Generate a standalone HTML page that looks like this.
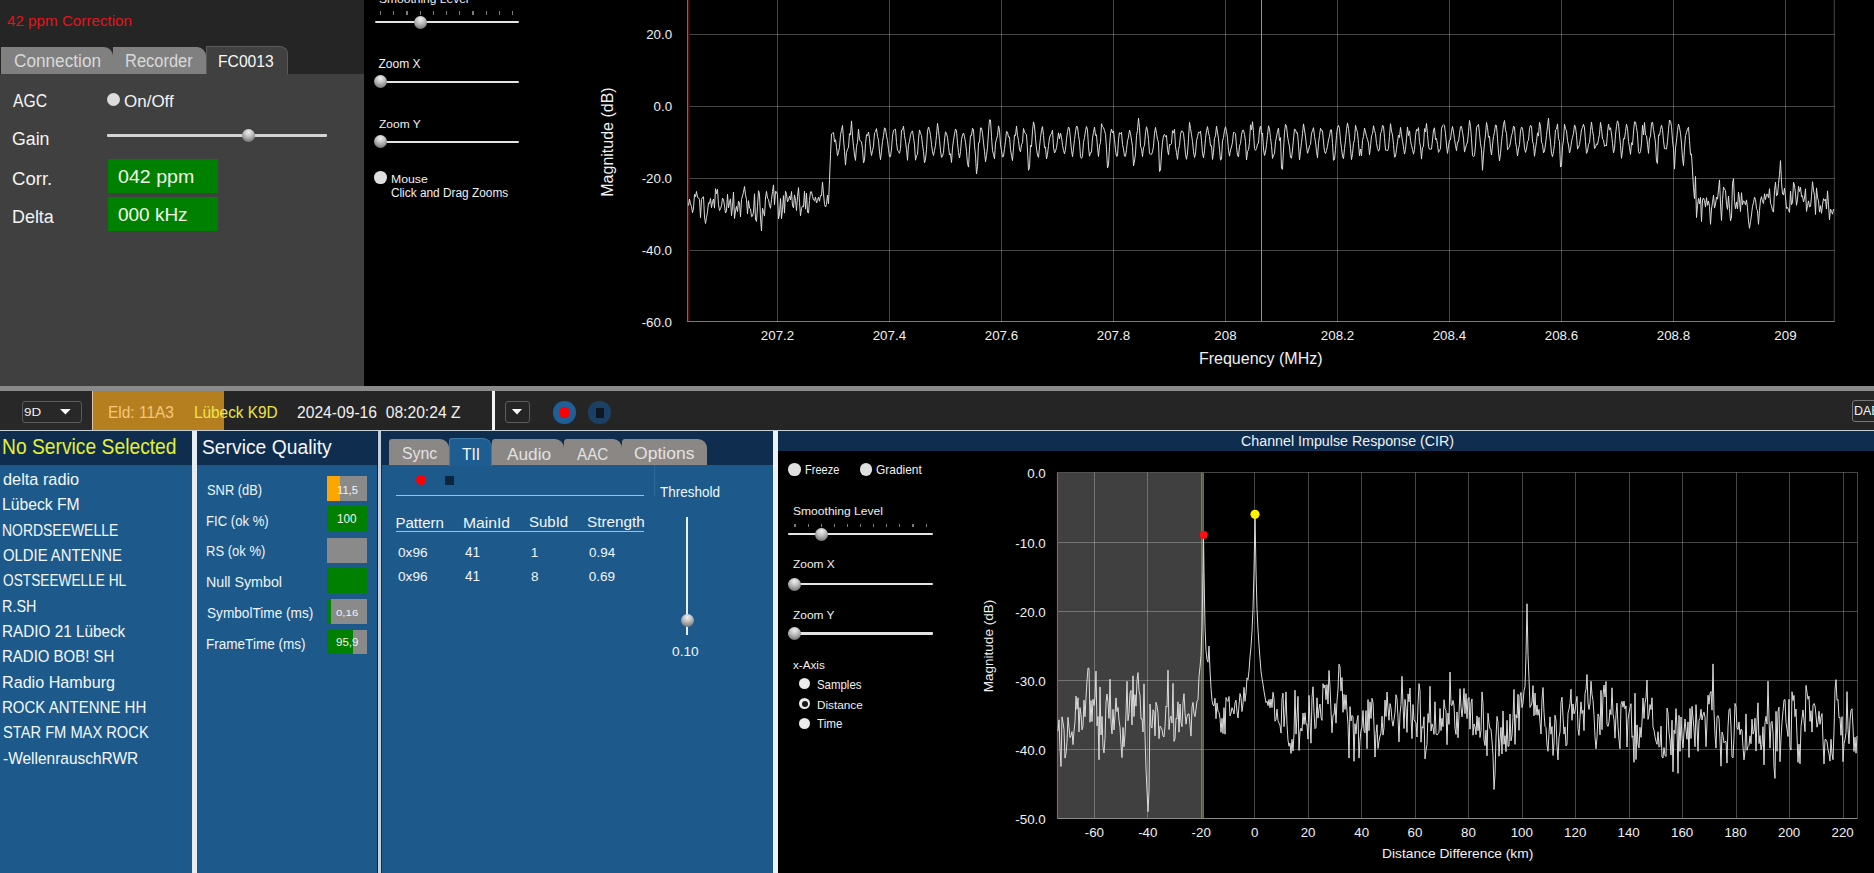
<!DOCTYPE html><html><head><meta charset="utf-8"><style>html,body{margin:0;padding:0;width:1874px;height:873px;overflow:hidden;background:#000;font-family:"Liberation Sans", sans-serif;position:relative}div{box-sizing:border-box}</style></head><body><div style="position:absolute;left:0px;top:0px;width:364px;height:74px;background:#252525;"></div><div style="position:absolute;left:7.30px;top:13.26px;font-size:15.29px;line-height:15.29px;color:#e3141c;white-space:pre;transform:scaleX(0.9942);transform-origin:0 0;">42 ppm Correction</div><div style="position:absolute;left:1px;top:47px;width:112px;height:27px;background:#808080;border-radius:0 9px 0 0"></div><div style="position:absolute;left:113px;top:47px;width:93px;height:27px;background:#808080;border-radius:0 9px 0 0"></div><div style="position:absolute;left:206px;top:46px;width:82px;height:29px;background:#404040;border-radius:0 8px 0 0;border:1px solid #5a5a5a;border-bottom:none"></div><div style="position:absolute;left:13.54px;top:53.23px;font-size:17.57px;line-height:17.57px;color:#d9d9d9;white-space:pre;transform:scaleX(0.9794);transform-origin:0 0;">Connection</div><div style="position:absolute;left:125.38px;top:53.13px;font-size:17.68px;line-height:17.68px;color:#d9d9d9;white-space:pre;transform:scaleX(0.9311);transform-origin:0 0;">Recorder</div><div style="position:absolute;left:218.24px;top:53.28px;font-size:17.39px;line-height:17.39px;color:#f8f8f8;white-space:pre;transform:scaleX(0.9023);transform-origin:0 0;">FC0013</div><div style="position:absolute;left:0px;top:74px;width:364px;height:312px;background:#404040;"></div><div style="position:absolute;left:13.40px;top:91.10px;font-size:19.14px;line-height:19.14px;color:#f4f4f4;white-space:pre;transform:scaleX(0.8216);transform-origin:0 0;">AGC</div><div style="position:absolute;left:12.31px;top:130.65px;font-size:17.43px;line-height:17.43px;color:#f4f4f4;white-space:pre;transform:scaleX(1.0181);transform-origin:0 0;">Gain</div><div style="position:absolute;left:12.27px;top:169.54px;font-size:18.14px;line-height:18.14px;color:#f4f4f4;white-space:pre;transform:scaleX(1.0234);transform-origin:0 0;">Corr.</div><div style="position:absolute;left:12.17px;top:206.81px;font-size:19.13px;line-height:19.13px;color:#f4f4f4;white-space:pre;transform:scaleX(0.9365);transform-origin:0 0;">Delta</div><div style="position:absolute;left:107.00px;top:92.90px;width:13.2px;height:13.2px;border-radius:50%;background:#dcdcdc"></div><div style="position:absolute;left:123.74px;top:94.16px;font-size:16.00px;line-height:16.00px;color:#f4f4f4;white-space:pre;transform:scaleX(1.0615);transform-origin:0 0;">On/Off</div><div style="position:absolute;left:107px;top:134px;width:220px;height:2.6px;background:#d4d4d4;border-radius:1px"></div><div style="position:absolute;left:241.80px;top:128.50px;width:13.6px;height:13.6px;border-radius:50%;background:radial-gradient(circle at 50% 25%, #f0f0f0 0%, #c4c4c4 35%, #7a7a7a 80%, #5a5a5a 100%)"></div><div style="position:absolute;left:108px;top:159px;width:109.5px;height:33.6px;background:#008000;"></div><div style="position:absolute;left:108px;top:197.1px;width:109.5px;height:33.6px;background:#008000;"></div><div style="position:absolute;left:118.11px;top:168.70px;font-size:17.71px;line-height:17.71px;color:#f4fae8;white-space:pre;transform:scaleX(1.1082);transform-origin:0 0;">042 ppm</div><div style="position:absolute;left:118.14px;top:205.84px;font-size:18.14px;line-height:18.14px;color:#f4fae8;white-space:pre;transform:scaleX(1.0469);transform-origin:0 0;">000 kHz</div><div style="position:absolute;left:364px;top:0px;width:1510px;height:386px;background:#000;"></div><div style="position:absolute;left:379.16px;top:-6.17px;font-size:11.43px;line-height:11.43px;color:#f0f0f0;white-space:pre;transform:scaleX(1.0521);transform-origin:0 0;">Smoothing Level</div><div style="position:absolute;left:374.6px;top:20.95px;width:144.19999999999993px;height:2.5px;background:#e4e4e4;border-radius:1px"></div><div style="position:absolute;left:380.00px;top:11px;width:1.2px;height:3.5px;background:#7a7a7a"></div><div style="position:absolute;left:393.20px;top:11px;width:1.2px;height:3.5px;background:#7a7a7a"></div><div style="position:absolute;left:406.40px;top:11px;width:1.2px;height:3.5px;background:#7a7a7a"></div><div style="position:absolute;left:419.60px;top:11px;width:1.2px;height:3.5px;background:#7a7a7a"></div><div style="position:absolute;left:432.80px;top:11px;width:1.2px;height:3.5px;background:#7a7a7a"></div><div style="position:absolute;left:446.00px;top:11px;width:1.2px;height:3.5px;background:#7a7a7a"></div><div style="position:absolute;left:459.20px;top:11px;width:1.2px;height:3.5px;background:#7a7a7a"></div><div style="position:absolute;left:472.40px;top:11px;width:1.2px;height:3.5px;background:#7a7a7a"></div><div style="position:absolute;left:485.60px;top:11px;width:1.2px;height:3.5px;background:#7a7a7a"></div><div style="position:absolute;left:498.80px;top:11px;width:1.2px;height:3.5px;background:#7a7a7a"></div><div style="position:absolute;left:512.00px;top:11px;width:1.2px;height:3.5px;background:#7a7a7a"></div><div style="position:absolute;left:414.00px;top:15.70px;width:13.0px;height:13.0px;border-radius:50%;background:radial-gradient(circle at 50% 25%, #f0f0f0 0%, #c4c4c4 35%, #7a7a7a 80%, #5a5a5a 100%)"></div><div style="position:absolute;left:378.54px;top:57.82px;font-size:12.03px;line-height:12.03px;color:#f0f0f0;white-space:pre;">Zoom X</div><div style="position:absolute;left:374.6px;top:80.65px;width:144.19999999999993px;height:2.5px;background:#e4e4e4;border-radius:1px"></div><div style="position:absolute;left:374.40px;top:75.40px;width:13.0px;height:13.0px;border-radius:50%;background:radial-gradient(circle at 50% 25%, #f0f0f0 0%, #c4c4c4 35%, #7a7a7a 80%, #5a5a5a 100%)"></div><div style="position:absolute;left:378.54px;top:117.86px;font-size:11.74px;line-height:11.74px;color:#f0f0f0;white-space:pre;transform:scaleX(1.0207);transform-origin:0 0;">Zoom Y</div><div style="position:absolute;left:374.6px;top:140.65px;width:144.19999999999993px;height:2.5px;background:#e4e4e4;border-radius:1px"></div><div style="position:absolute;left:374.40px;top:135.40px;width:13.0px;height:13.0px;border-radius:50%;background:radial-gradient(circle at 50% 25%, #f0f0f0 0%, #c4c4c4 35%, #7a7a7a 80%, #5a5a5a 100%)"></div><div style="position:absolute;left:373.80px;top:170.80px;width:12.8px;height:12.8px;border-radius:50%;background:#e0e0e0"></div><div style="position:absolute;left:390.52px;top:172.56px;font-size:11.74px;line-height:11.74px;color:#f0f0f0;white-space:pre;transform:scaleX(1.0459);transform-origin:0 0;">Mouse</div><div style="position:absolute;left:390.91px;top:188.26px;font-size:11.86px;line-height:11.86px;color:#f0f0f0;white-space:pre;">Click and Drag Zooms</div><div style="position:absolute;left:0px;top:386px;width:1874px;height:5px;background:#8a8a8a;"></div><div style="position:absolute;left:0px;top:391px;width:1874px;height:39px;background:#252525;"></div><div style="position:absolute;left:0px;top:391px;width:92px;height:39px;background:#282828;"></div><div style="position:absolute;left:92px;top:391px;width:1px;height:39px;background:#d8c8a8;"></div><div style="position:absolute;left:93px;top:391px;width:131px;height:38.5px;background:#b57f1f;"></div><div style="position:absolute;left:22.2px;top:401.2px;width:59.6px;height:22.1px;border:1.5px solid #5c5c5c;border-radius:3px"></div><div style="position:absolute;left:23.50px;top:407.09px;font-size:11.59px;line-height:11.59px;color:#f2f2f2;white-space:pre;transform:scaleX(1.1573);transform-origin:0 0;">9D</div><svg style="position:absolute;left:0;top:0" width="1874" height="873"><polygon points="60.1,408.9 70.7,408.9 65.4,414.6" fill="#fff"/><polygon points="511.9,409 522,409 517,414.4" fill="#fff"/></svg><div style="position:absolute;left:107.66px;top:404.51px;font-size:16.52px;line-height:16.52px;color:#f6c778;white-space:pre;transform:scaleX(0.9371);transform-origin:0 0;">Eld: 11A3</div><div style="position:absolute;left:193.57px;top:404.51px;font-size:16.52px;line-height:16.52px;color:#ece648;white-space:pre;transform:scaleX(0.9295);transform-origin:0 0;">Lübeck K9D</div><div style="position:absolute;left:296.82px;top:404.86px;font-size:16.00px;line-height:16.00px;color:#f0f0f0;white-space:pre;transform:scaleX(0.9776);transform-origin:0 0;">2024-09-16  08:20:24 Z</div><div style="position:absolute;left:492px;top:391px;width:3px;height:39px;background:#f4f4f4;"></div><div style="position:absolute;left:505.2px;top:401.2px;width:24.6px;height:22px;border:1.5px solid #5c5c5c;border-radius:3px"></div><div style="position:absolute;left:553.3px;top:401.2px;width:22.4px;height:22.4px;border-radius:50%;background:#1f5e96"></div><div style="position:absolute;left:559.3px;top:407.2px;width:10.4px;height:10.4px;border-radius:50%;background:#ff0000"></div><div style="position:absolute;left:588.4px;top:401.2px;width:22.4px;height:22.4px;border-radius:50%;background:#1c4064"></div><div style="position:absolute;left:595.9px;top:407.9px;width:8.2px;height:9.7px;background:#0e1722;"></div><div style="position:absolute;left:1852px;top:400.3px;width:40px;height:21.4px;border:1.5px solid #777;border-radius:3px"></div><div style="position:absolute;left:1853.90px;top:404.85px;font-size:12.46px;line-height:12.46px;color:#f0f0f0;white-space:pre;">DAB</div><div style="position:absolute;left:0px;top:429.5px;width:1874px;height:1.6px;background:#c5cfd8;"></div><div style="position:absolute;left:0px;top:431px;width:192px;height:34px;background:#0f2d4f;"></div><div style="position:absolute;left:0px;top:465px;width:192px;height:408px;background:#1d5a8b;"></div><div style="position:absolute;left:192px;top:431px;width:5px;height:442px;background:#e6ecf2;"></div><div style="position:absolute;left:197px;top:431px;width:180px;height:34px;background:#0f2d4f;"></div><div style="position:absolute;left:197px;top:465px;width:180px;height:408px;background:#1d5a8b;"></div><div style="position:absolute;left:377px;top:431px;width:1px;height:442px;background:#0c2340;"></div><div style="position:absolute;left:378px;top:431px;width:3px;height:442px;background:#c4d0dc;"></div><div style="position:absolute;left:381px;top:431px;width:392px;height:34px;background:#0f2d4f;"></div><div style="position:absolute;left:381px;top:465px;width:392px;height:408px;background:#1d5a8b;"></div><div style="position:absolute;left:381px;top:431px;width:1.2px;height:442px;background:#0f2d4f;"></div><div style="position:absolute;left:773px;top:431px;width:5px;height:442px;background:#eef2f6;"></div><div style="position:absolute;left:778px;top:431px;width:1096px;height:20px;background:#0f2d4f;"></div><div style="position:absolute;left:778px;top:451px;width:1096px;height:422px;background:#000;"></div><div style="position:absolute;left:1.66px;top:437.27px;font-size:21.30px;line-height:21.30px;color:#e4f032;white-space:pre;transform:scaleX(0.9046);transform-origin:0 0;">No Service Selected</div><div style="position:absolute;left:2.95px;top:471.12px;font-size:17.10px;line-height:17.10px;color:#f4f8fc;white-space:pre;transform:scaleX(0.9542);transform-origin:0 0;">delta radio</div><div style="position:absolute;left:2.34px;top:496.44px;font-size:17.10px;line-height:17.10px;color:#f4f8fc;white-space:pre;transform:scaleX(0.9190);transform-origin:0 0;">Lübeck FM</div><div style="position:absolute;left:2.48px;top:521.76px;font-size:17.10px;line-height:17.10px;color:#f4f8fc;white-space:pre;transform:scaleX(0.8157);transform-origin:0 0;">NORDSEEWELLE</div><div style="position:absolute;left:2.93px;top:547.08px;font-size:17.10px;line-height:17.10px;color:#f4f8fc;white-space:pre;transform:scaleX(0.8688);transform-origin:0 0;">OLDIE ANTENNE</div><div style="position:absolute;left:2.98px;top:572.40px;font-size:17.10px;line-height:17.10px;color:#f4f8fc;white-space:pre;transform:scaleX(0.8006);transform-origin:0 0;">OSTSEEWELLE HL</div><div style="position:absolute;left:2.45px;top:597.72px;font-size:17.10px;line-height:17.10px;color:#f4f8fc;white-space:pre;transform:scaleX(0.8410);transform-origin:0 0;">R.SH</div><div style="position:absolute;left:2.38px;top:623.04px;font-size:17.10px;line-height:17.10px;color:#f4f8fc;white-space:pre;transform:scaleX(0.8947);transform-origin:0 0;">RADIO 21 Lübeck</div><div style="position:absolute;left:2.40px;top:648.36px;font-size:17.10px;line-height:17.10px;color:#f4f8fc;white-space:pre;transform:scaleX(0.8763);transform-origin:0 0;">RADIO BOB! SH</div><div style="position:absolute;left:2.31px;top:673.68px;font-size:17.10px;line-height:17.10px;color:#f4f8fc;white-space:pre;transform:scaleX(0.9445);transform-origin:0 0;">Radio Hamburg</div><div style="position:absolute;left:2.40px;top:699.00px;font-size:17.10px;line-height:17.10px;color:#f4f8fc;white-space:pre;transform:scaleX(0.8780);transform-origin:0 0;">ROCK ANTENNE HH</div><div style="position:absolute;left:2.94px;top:724.32px;font-size:17.10px;line-height:17.10px;color:#f4f8fc;white-space:pre;transform:scaleX(0.8585);transform-origin:0 0;">STAR FM MAX ROCK</div><div style="position:absolute;left:2.90px;top:749.64px;font-size:17.10px;line-height:17.10px;color:#f4f8fc;white-space:pre;transform:scaleX(0.9052);transform-origin:0 0;">-WellenrauschRWR</div><div style="position:absolute;left:201.73px;top:438.35px;font-size:19.43px;line-height:19.43px;color:#f6f8fa;white-space:pre;transform:scaleX(0.9932);transform-origin:0 0;">Service Quality</div><div style="position:absolute;left:206.92px;top:481.82px;font-size:15.22px;line-height:15.22px;color:#eef4fa;white-space:pre;transform:scaleX(0.8462);transform-origin:0 0;">SNR (dB)</div><div style="position:absolute;left:206.45px;top:512.62px;font-size:15.22px;line-height:15.22px;color:#eef4fa;white-space:pre;transform:scaleX(0.8620);transform-origin:0 0;">FIC (ok %)</div><div style="position:absolute;left:206.46px;top:543.42px;font-size:15.22px;line-height:15.22px;color:#eef4fa;white-space:pre;transform:scaleX(0.8558);transform-origin:0 0;">RS (ok %)</div><div style="position:absolute;left:206.36px;top:574.22px;font-size:15.22px;line-height:15.22px;color:#eef4fa;white-space:pre;transform:scaleX(0.9357);transform-origin:0 0;">Null Symbol</div><div style="position:absolute;left:206.89px;top:605.02px;font-size:15.22px;line-height:15.22px;color:#eef4fa;white-space:pre;transform:scaleX(0.8956);transform-origin:0 0;">SymbolTime (ms)</div><div style="position:absolute;left:206.42px;top:635.82px;font-size:15.22px;line-height:15.22px;color:#eef4fa;white-space:pre;transform:scaleX(0.8896);transform-origin:0 0;">FrameTime (ms)</div><div style="position:absolute;left:327.2px;top:476px;width:40px;height:24.8px;background:#8a8a8a;"></div><div style="position:absolute;left:327.2px;top:476px;width:12.6px;height:24.8px;background:#ffa500;"></div><div style="position:absolute;left:327.2px;top:506.4px;width:40px;height:24.8px;background:#8a8a8a;"></div><div style="position:absolute;left:327.2px;top:506.4px;width:40px;height:24.8px;background:#008000;"></div><div style="position:absolute;left:327.2px;top:537.8px;width:40px;height:24.8px;background:#8a8a8a;"></div><div style="position:absolute;left:327.2px;top:568.2px;width:40px;height:24.8px;background:#8a8a8a;"></div><div style="position:absolute;left:327.2px;top:568.2px;width:40px;height:24.8px;background:#008000;"></div><div style="position:absolute;left:327.2px;top:598.8px;width:40px;height:24.8px;background:#8a8a8a;"></div><div style="position:absolute;left:327.2px;top:598.8px;width:4px;height:24.8px;background:#008000;"></div><div style="position:absolute;left:327.2px;top:629.6px;width:40px;height:24.8px;background:#8a8a8a;"></div><div style="position:absolute;left:327.2px;top:629.6px;width:25.4px;height:24.8px;background:#008000;"></div><div style="position:absolute;left:336.56px;top:484.52px;font-size:10.72px;line-height:10.72px;color:#f4f4f4;white-space:pre;transform:scaleX(1.0413);transform-origin:0 0;">11,5</div><div style="position:absolute;left:337.32px;top:514.24px;font-size:11.88px;line-height:11.88px;color:#f4f4f4;white-space:pre;transform:scaleX(0.9849);transform-origin:0 0;">100</div><div style="position:absolute;left:335.84px;top:607.56px;font-size:9.86px;line-height:9.86px;color:#f4f4f4;white-space:pre;transform:scaleX(1.1641);transform-origin:0 0;">0,16</div><div style="position:absolute;left:335.78px;top:638.09px;font-size:10.29px;line-height:10.29px;color:#f4f4f4;white-space:pre;transform:scaleX(1.1216);transform-origin:0 0;">95,9</div><div style="position:absolute;left:388.9px;top:438.7px;width:60.60000000000002px;height:26.5px;background:#8a8785;border-radius:3px 9px 0 0"></div><div style="position:absolute;left:492.3px;top:438.7px;width:71.69999999999999px;height:26.5px;background:#8a8785;border-radius:3px 9px 0 0"></div><div style="position:absolute;left:563.6px;top:438.7px;width:58.39999999999998px;height:26.5px;background:#8a8785;border-radius:3px 9px 0 0"></div><div style="position:absolute;left:621.8px;top:438.7px;width:85.20000000000005px;height:26.5px;background:#8a8785;border-radius:3px 9px 0 0"></div><div style="position:absolute;left:449px;top:438.2px;width:43.30000000000001px;height:28px;background:#1e5d92;border:1px solid #3f79a8;border-bottom:none;border-radius:3px 9px 0 0"></div><div style="position:absolute;left:401.59px;top:446.23px;font-size:16.86px;line-height:16.86px;color:#e2e2e2;white-space:pre;transform:scaleX(0.9387);transform-origin:0 0;">Sync</div><div style="position:absolute;left:462.49px;top:446.02px;font-size:17.10px;line-height:17.10px;color:#f4f8ff;white-space:pre;transform:scaleX(0.9090);transform-origin:0 0;">TII</div><div style="position:absolute;left:506.90px;top:446.02px;font-size:17.10px;line-height:17.10px;color:#e2e2e2;white-space:pre;transform:scaleX(1.0091);transform-origin:0 0;">Audio</div><div style="position:absolute;left:577.40px;top:446.02px;font-size:17.10px;line-height:17.10px;color:#e2e2e2;white-space:pre;transform:scaleX(0.8887);transform-origin:0 0;">AAC</div><div style="position:absolute;left:634.21px;top:446.23px;font-size:16.86px;line-height:16.86px;color:#e2e2e2;white-space:pre;transform:scaleX(1.0401);transform-origin:0 0;">Options</div><div style="position:absolute;left:415.6px;top:475.3px;width:10.2px;height:10.2px;border-radius:50%;background:#ff0000"></div><div style="position:absolute;left:444.7px;top:475.8px;width:9.2px;height:9.2px;background:#0b2640;"></div><div style="position:absolute;left:396px;top:495px;width:247.5px;height:1.3px;background:#9cc2e0;"></div><div style="position:absolute;left:653.5px;top:465px;width:1px;height:32px;background:#2d6a9c;"></div><div style="position:absolute;left:395.40px;top:514.54px;font-size:15.07px;line-height:15.07px;color:#f0f6fc;white-space:pre;">Pattern</div><div style="position:absolute;left:462.74px;top:514.54px;font-size:15.07px;line-height:15.07px;color:#f0f6fc;white-space:pre;transform:scaleX(1.0411);transform-origin:0 0;">MainId</div><div style="position:absolute;left:528.73px;top:514.72px;font-size:14.86px;line-height:14.86px;color:#f0f6fc;white-space:pre;transform:scaleX(1.0096);transform-origin:0 0;">SubId</div><div style="position:absolute;left:586.81px;top:514.72px;font-size:14.86px;line-height:14.86px;color:#f0f6fc;white-space:pre;transform:scaleX(1.0270);transform-origin:0 0;">Strength</div><div style="position:absolute;left:396.2px;top:531.2px;width:247.7px;height:1.3px;background:#9cc2e0;"></div><div style="position:absolute;left:397.95px;top:545.71px;font-size:13.57px;line-height:13.57px;color:#f0f6fc;white-space:pre;transform:scaleX(1.0072);transform-origin:0 0;">0x96</div><div style="position:absolute;left:464.53px;top:545.55px;font-size:13.77px;line-height:13.77px;color:#f0f6fc;white-space:pre;transform:scaleX(0.9800);transform-origin:0 0;">41</div><div style="position:absolute;left:530.85px;top:545.77px;font-size:13.50px;line-height:13.50px;color:#f0f6fc;white-space:pre;">1</div><div style="position:absolute;left:588.76px;top:545.71px;font-size:13.57px;line-height:13.57px;color:#f0f6fc;white-space:pre;transform:scaleX(0.9903);transform-origin:0 0;">0.94</div><div style="position:absolute;left:397.95px;top:570.31px;font-size:13.57px;line-height:13.57px;color:#f0f6fc;white-space:pre;transform:scaleX(1.0072);transform-origin:0 0;">0x96</div><div style="position:absolute;left:464.53px;top:570.15px;font-size:13.77px;line-height:13.77px;color:#f0f6fc;white-space:pre;transform:scaleX(0.9800);transform-origin:0 0;">41</div><div style="position:absolute;left:531.02px;top:570.37px;font-size:13.50px;line-height:13.50px;color:#f0f6fc;white-space:pre;">8</div><div style="position:absolute;left:588.76px;top:570.31px;font-size:13.57px;line-height:13.57px;color:#f0f6fc;white-space:pre;">0.69</div><div style="position:absolute;left:659.93px;top:485.48px;font-size:14.20px;line-height:14.20px;color:#f0f6fc;white-space:pre;transform:scaleX(0.9512);transform-origin:0 0;">Threshold</div><div style="position:absolute;left:686px;top:517px;width:2.4px;height:118px;background:#e8eef4;"></div><div style="position:absolute;left:680.60px;top:613.60px;width:13.2px;height:13.2px;border-radius:50%;background:radial-gradient(circle at 50% 25%, #f0f0f0 0%, #c4c4c4 35%, #7a7a7a 80%, #5a5a5a 100%)"></div><div style="position:absolute;left:672.25px;top:645.17px;font-size:13.14px;line-height:13.14px;color:#f0f6fc;white-space:pre;transform:scaleX(1.0457);transform-origin:0 0;">0.10</div><div style="position:absolute;left:1241.09px;top:433.79px;font-size:14.43px;line-height:14.43px;color:#eef2f6;white-space:pre;transform:scaleX(0.9882);transform-origin:0 0;">Channel Impulse Response (CIR)</div><div style="position:absolute;left:788.00px;top:463.20px;width:12.6px;height:12.6px;border-radius:50%;background:#e0e0e0"></div><div style="position:absolute;left:804.72px;top:463.46px;font-size:13.04px;line-height:13.04px;color:#f0f0f0;white-space:pre;transform:scaleX(0.8450);transform-origin:0 0;">Freeze</div><div style="position:absolute;left:859.70px;top:463.20px;width:12.6px;height:12.6px;border-radius:50%;background:#e0e0e0"></div><div style="position:absolute;left:875.70px;top:463.62px;font-size:12.86px;line-height:12.86px;color:#f0f0f0;white-space:pre;transform:scaleX(0.9280);transform-origin:0 0;">Gradient</div><div style="position:absolute;left:792.66px;top:505.73px;font-size:11.43px;line-height:11.43px;color:#f0f0f0;white-space:pre;transform:scaleX(1.0569);transform-origin:0 0;">Smoothing Level</div><div style="position:absolute;left:788px;top:532.75px;width:144.89999999999998px;height:2.5px;background:#e4e4e4;border-radius:1px"></div><div style="position:absolute;left:794.40px;top:523.5px;width:1.2px;height:3.5px;background:#7a7a7a"></div><div style="position:absolute;left:807.51px;top:523.5px;width:1.2px;height:3.5px;background:#7a7a7a"></div><div style="position:absolute;left:820.62px;top:523.5px;width:1.2px;height:3.5px;background:#7a7a7a"></div><div style="position:absolute;left:833.73px;top:523.5px;width:1.2px;height:3.5px;background:#7a7a7a"></div><div style="position:absolute;left:846.84px;top:523.5px;width:1.2px;height:3.5px;background:#7a7a7a"></div><div style="position:absolute;left:859.95px;top:523.5px;width:1.2px;height:3.5px;background:#7a7a7a"></div><div style="position:absolute;left:873.06px;top:523.5px;width:1.2px;height:3.5px;background:#7a7a7a"></div><div style="position:absolute;left:886.17px;top:523.5px;width:1.2px;height:3.5px;background:#7a7a7a"></div><div style="position:absolute;left:899.28px;top:523.5px;width:1.2px;height:3.5px;background:#7a7a7a"></div><div style="position:absolute;left:912.39px;top:523.5px;width:1.2px;height:3.5px;background:#7a7a7a"></div><div style="position:absolute;left:925.50px;top:523.5px;width:1.2px;height:3.5px;background:#7a7a7a"></div><div style="position:absolute;left:814.50px;top:527.50px;width:13.0px;height:13.0px;border-radius:50%;background:radial-gradient(circle at 50% 25%, #f0f0f0 0%, #c4c4c4 35%, #7a7a7a 80%, #5a5a5a 100%)"></div><div style="position:absolute;left:792.84px;top:559.39px;font-size:11.59px;line-height:11.59px;color:#f0f0f0;white-space:pre;transform:scaleX(1.0300);transform-origin:0 0;">Zoom X</div><div style="position:absolute;left:788px;top:582.85px;width:144.89999999999998px;height:2.5px;background:#e4e4e4;border-radius:1px"></div><div style="position:absolute;left:788.40px;top:577.60px;width:13.0px;height:13.0px;border-radius:50%;background:radial-gradient(circle at 50% 25%, #f0f0f0 0%, #c4c4c4 35%, #7a7a7a 80%, #5a5a5a 100%)"></div><div style="position:absolute;left:792.84px;top:609.26px;font-size:11.74px;line-height:11.74px;color:#f0f0f0;white-space:pre;transform:scaleX(1.0133);transform-origin:0 0;">Zoom Y</div><div style="position:absolute;left:788px;top:632.35px;width:144.89999999999998px;height:2.5px;background:#e4e4e4;border-radius:1px"></div><div style="position:absolute;left:788.40px;top:627.10px;width:13.0px;height:13.0px;border-radius:50%;background:radial-gradient(circle at 50% 25%, #f0f0f0 0%, #c4c4c4 35%, #7a7a7a 80%, #5a5a5a 100%)"></div><div style="position:absolute;left:792.88px;top:658.86px;font-size:11.74px;line-height:11.74px;color:#f0f0f0;white-space:pre;">x-Axis</div><div style="position:absolute;left:799.20px;top:678.30px;width:11.2px;height:11.2px;border-radius:50%;background:#ececec"></div><div style="position:absolute;left:799.20px;top:698.30px;width:11.2px;height:11.2px;border-radius:50%;background:#ececec"></div><div style="position:absolute;left:801.80px;top:700.90px;width:6.0px;height:6.0px;border-radius:50%;background:#1a1a1a"></div><div style="position:absolute;left:799.20px;top:718.30px;width:11.2px;height:11.2px;border-radius:50%;background:#ececec"></div><div style="position:absolute;left:816.99px;top:678.92px;font-size:12.14px;line-height:12.14px;color:#f0f0f0;white-space:pre;transform:scaleX(0.9424);transform-origin:0 0;">Samples</div><div style="position:absolute;left:816.56px;top:699.51px;font-size:11.45px;line-height:11.45px;color:#f0f0f0;white-space:pre;transform:scaleX(1.0277);transform-origin:0 0;">Distance</div><div style="position:absolute;left:817.27px;top:719.04px;font-size:11.88px;line-height:11.88px;color:#f0f0f0;white-space:pre;transform:scaleX(0.9804);transform-origin:0 0;">Time</div><svg style="position:absolute;left:0;top:0" width="1874" height="873"><line x1="688" y1="34.5" x2="1834.5" y2="34.5" stroke="rgba(255,255,255,0.27)" stroke-width="1"/><line x1="688" y1="106.5" x2="1834.5" y2="106.5" stroke="rgba(255,255,255,0.27)" stroke-width="1"/><line x1="688" y1="178.5" x2="1834.5" y2="178.5" stroke="rgba(255,255,255,0.27)" stroke-width="1"/><line x1="688" y1="250.5" x2="1834.5" y2="250.5" stroke="rgba(255,255,255,0.27)" stroke-width="1"/><line x1="687" y1="321.5" x2="1834.5" y2="321.5" stroke="#787878" stroke-width="1"/><line x1="777.5" y1="0" x2="777.5" y2="322" stroke="rgba(255,255,255,0.27)" stroke-width="1"/><line x1="889.5" y1="0" x2="889.5" y2="322" stroke="rgba(255,255,255,0.27)" stroke-width="1"/><line x1="1001.5" y1="0" x2="1001.5" y2="322" stroke="rgba(255,255,255,0.27)" stroke-width="1"/><line x1="1113.5" y1="0" x2="1113.5" y2="322" stroke="rgba(255,255,255,0.27)" stroke-width="1"/><line x1="1225.5" y1="0" x2="1225.5" y2="322" stroke="rgba(255,255,255,0.27)" stroke-width="1"/><line x1="1337.5" y1="0" x2="1337.5" y2="322" stroke="rgba(255,255,255,0.27)" stroke-width="1"/><line x1="1449.5" y1="0" x2="1449.5" y2="322" stroke="rgba(255,255,255,0.27)" stroke-width="1"/><line x1="1561.5" y1="0" x2="1561.5" y2="322" stroke="rgba(255,255,255,0.27)" stroke-width="1"/><line x1="1673.5" y1="0" x2="1673.5" y2="322" stroke="rgba(255,255,255,0.27)" stroke-width="1"/><line x1="1785.5" y1="0" x2="1785.5" y2="322" stroke="rgba(255,255,255,0.27)" stroke-width="1"/><line x1="1834.3" y1="0" x2="1834.3" y2="322" stroke="rgba(255,255,255,0.27)" stroke-width="1"/><line x1="687.5" y1="0" x2="687.5" y2="322" stroke="#787878" stroke-width="1"/><line x1="688.7" y1="0" x2="688.7" y2="321" stroke="#4e1010" stroke-width="1.6"/><line x1="1261.5" y1="0" x2="1261.5" y2="321" stroke="#a09c44" stroke-width="1"/><polyline points="688.5,205.5 689.5,199.1 690.5,204.1 691.5,206.4 692.5,212.8 693.5,208.0 694.5,194.3 695.5,196.6 696.5,191.5 697.5,197.4 698.5,197.8 699.5,199.8 700.5,217.6 701.5,199.6 702.5,197.4 703.5,196.8 704.5,217.0 705.5,223.5 706.5,217.5 707.5,211.8 708.5,202.9 709.5,203.5 710.5,198.4 711.5,207.7 712.5,201.7 713.5,199.0 714.5,208.1 715.5,188.7 716.5,193.6 717.5,189.2 718.5,204.7 719.5,210.5 720.5,208.6 721.5,205.8 722.5,198.1 723.5,199.3 724.5,206.2 725.5,213.0 726.5,210.9 727.5,194.2 728.5,208.0 729.5,202.3 730.5,198.9 731.5,215.7 732.5,206.5 733.5,192.0 734.5,218.5 735.5,210.8 736.5,206.4 737.5,211.7 738.5,201.1 739.5,203.1 740.5,216.8 741.5,199.6 742.5,195.9 743.5,192.2 744.5,186.5 745.5,194.8 746.5,199.5 747.5,214.1 748.5,200.7 749.5,208.1 750.5,208.9 751.5,216.6 752.5,216.2 753.5,212.0 754.5,193.8 755.5,219.2 756.5,221.5 757.5,206.4 758.5,190.7 759.5,194.1 760.5,218.1 761.5,231.0 762.5,208.2 763.5,211.5 764.5,216.1 765.5,198.0 766.5,191.4 767.5,198.2 768.5,199.4 769.5,205.2 770.5,208.3 771.5,199.7 772.5,191.6 773.5,184.9 774.5,204.7 775.5,191.4 776.5,191.8 777.5,194.8 778.5,219.0 779.5,213.8 780.5,198.5 781.5,218.6 782.5,209.5 783.5,195.6 784.5,213.1 785.5,191.2 786.5,194.4 787.5,201.9 788.5,199.8 789.5,196.1 790.5,199.9 791.5,191.5 792.5,205.8 793.5,207.8 794.5,194.9 795.5,200.4 796.5,210.5 797.5,196.6 798.5,187.6 799.5,202.6 800.5,215.8 801.5,208.2 802.5,206.1 803.5,206.8 804.5,191.2 805.5,209.1 806.5,193.2 807.5,212.0 808.5,213.1 809.5,200.3 810.5,191.8 811.5,191.8 812.5,196.5 813.5,199.9 814.5,200.8 815.5,197.1 816.5,203.0 817.5,200.5 818.5,197.1 819.5,201.3 820.5,195.5 821.5,195.6 822.5,182.2 823.5,193.9 824.5,204.3 825.5,207.0 826.5,204.4 827.5,195.0 828.5,203.8 829.5,179.8 830.5,154.7 831.5,134.0 832.5,133.2 833.5,132.6 834.5,141.9 835.5,139.7 836.5,147.3 837.5,155.7 838.5,152.3 839.5,147.2 840.5,134.7 841.5,130.3 842.5,125.5 843.5,138.9 844.5,151.7 845.5,165.1 846.5,152.5 847.5,149.4 848.5,147.2 849.5,133.6 850.5,135.1 851.5,120.9 852.5,135.9 853.5,146.3 854.5,155.0 855.5,160.4 856.5,146.3 857.5,142.5 858.5,129.0 859.5,139.8 860.5,141.0 861.5,142.0 862.5,148.7 863.5,162.8 864.5,160.5 865.5,143.7 866.5,134.6 867.5,135.7 868.5,132.0 869.5,138.5 870.5,149.2 871.5,155.5 872.5,150.7 873.5,146.2 874.5,132.8 875.5,131.9 876.5,128.6 877.5,136.5 878.5,140.2 879.5,151.9 880.5,159.8 881.5,150.9 882.5,141.5 883.5,135.8 884.5,127.8 885.5,128.9 886.5,136.1 887.5,140.6 888.5,149.4 889.5,156.7 890.5,156.6 891.5,149.0 892.5,136.2 893.5,130.2 894.5,129.7 895.5,129.2 896.5,142.6 897.5,150.2 898.5,151.5 899.5,153.3 900.5,148.6 901.5,130.2 902.5,129.9 903.5,126.3 904.5,135.7 905.5,141.7 906.5,149.4 907.5,160.3 908.5,144.9 909.5,141.3 910.5,134.7 911.5,132.3 912.5,130.9 913.5,137.5 914.5,144.9 915.5,160.2 916.5,155.7 917.5,154.7 918.5,138.9 919.5,129.9 920.5,133.4 921.5,135.5 922.5,144.8 923.5,151.5 924.5,162.8 925.5,159.1 926.5,149.7 927.5,131.1 928.5,127.0 929.5,130.3 930.5,135.3 931.5,144.3 932.5,151.8 933.5,155.5 934.5,150.4 935.5,145.4 936.5,135.3 937.5,123.3 938.5,130.6 939.5,140.3 940.5,150.7 941.5,157.4 942.5,156.4 943.5,152.2 944.5,140.0 945.5,131.8 946.5,133.4 947.5,137.6 948.5,146.4 949.5,155.0 950.5,153.7 951.5,162.5 952.5,147.9 953.5,140.1 954.5,134.1 955.5,129.0 956.5,130.8 957.5,143.2 958.5,152.6 959.5,158.0 960.5,151.7 961.5,139.4 962.5,135.1 963.5,133.0 964.5,136.8 965.5,142.3 966.5,151.2 967.5,163.7 968.5,167.1 969.5,149.1 970.5,135.6 971.5,135.7 972.5,128.2 973.5,129.8 974.5,145.9 975.5,155.1 976.5,174.0 977.5,166.5 978.5,142.7 979.5,142.5 980.5,127.9 981.5,128.0 982.5,133.2 983.5,142.9 984.5,151.3 985.5,161.7 986.5,155.6 987.5,147.3 988.5,131.9 989.5,119.8 990.5,120.0 991.5,136.6 992.5,150.7 993.5,154.4 994.5,158.7 995.5,143.1 996.5,139.1 997.5,135.7 998.5,125.9 999.5,129.6 1000.5,144.8 1001.5,150.6 1002.5,157.0 1003.5,156.4 1004.5,148.6 1005.5,141.1 1006.5,131.5 1007.5,132.1 1008.5,137.1 1009.5,137.0 1010.5,149.4 1011.5,155.5 1012.5,160.6 1013.5,147.8 1014.5,135.0 1015.5,135.6 1016.5,126.1 1017.5,135.5 1018.5,140.5 1019.5,149.5 1020.5,151.8 1021.5,144.6 1022.5,142.7 1023.5,128.5 1024.5,132.0 1025.5,133.5 1026.5,134.7 1027.5,150.0 1028.5,170.3 1029.5,167.5 1030.5,145.3 1031.5,146.7 1032.5,130.8 1033.5,121.9 1034.5,126.1 1035.5,138.9 1036.5,149.2 1037.5,155.1 1038.5,157.4 1039.5,146.9 1040.5,137.6 1041.5,130.3 1042.5,126.6 1043.5,135.4 1044.5,147.8 1045.5,147.1 1046.5,158.9 1047.5,154.3 1048.5,145.5 1049.5,138.0 1050.5,134.9 1051.5,133.8 1052.5,130.2 1053.5,147.1 1054.5,153.0 1055.5,151.1 1056.5,147.7 1057.5,140.4 1058.5,132.8 1059.5,138.9 1060.5,133.3 1061.5,137.3 1062.5,145.3 1063.5,150.4 1064.5,153.9 1065.5,149.2 1066.5,138.9 1067.5,131.5 1068.5,127.0 1069.5,128.9 1070.5,140.1 1071.5,150.3 1072.5,156.7 1073.5,148.2 1074.5,139.6 1075.5,131.9 1076.5,126.0 1077.5,127.1 1078.5,135.3 1079.5,142.0 1080.5,156.7 1081.5,158.4 1082.5,156.1 1083.5,142.3 1084.5,137.6 1085.5,130.7 1086.5,126.5 1087.5,130.0 1088.5,146.9 1089.5,156.3 1090.5,152.4 1091.5,152.3 1092.5,137.9 1093.5,132.5 1094.5,127.0 1095.5,135.5 1096.5,134.7 1097.5,147.7 1098.5,156.5 1099.5,145.8 1100.5,142.5 1101.5,123.7 1102.5,126.6 1103.5,127.5 1104.5,130.6 1105.5,134.3 1106.5,149.1 1107.5,168.0 1108.5,164.8 1109.5,146.6 1110.5,133.5 1111.5,129.0 1112.5,132.9 1113.5,131.0 1114.5,139.8 1115.5,149.8 1116.5,156.4 1117.5,155.9 1118.5,139.2 1119.5,132.7 1120.5,133.9 1121.5,132.3 1122.5,144.5 1123.5,148.9 1124.5,156.1 1125.5,156.3 1126.5,149.7 1127.5,140.7 1128.5,137.1 1129.5,130.0 1130.5,133.4 1131.5,140.1 1132.5,146.6 1133.5,165.9 1134.5,161.0 1135.5,153.8 1136.5,135.5 1137.5,130.5 1138.5,118.1 1139.5,127.7 1140.5,146.3 1141.5,148.9 1142.5,156.7 1143.5,147.6 1144.5,145.4 1145.5,132.9 1146.5,126.8 1147.5,130.9 1148.5,139.4 1149.5,153.4 1150.5,154.2 1151.5,154.4 1152.5,151.9 1153.5,146.1 1154.5,133.1 1155.5,127.4 1156.5,133.5 1157.5,139.5 1158.5,142.2 1159.5,171.5 1160.5,169.9 1161.5,154.0 1162.5,142.2 1163.5,135.7 1164.5,134.3 1165.5,136.9 1166.5,135.4 1167.5,149.6 1168.5,154.7 1169.5,144.5 1170.5,144.9 1171.5,143.3 1172.5,130.6 1173.5,133.1 1174.5,129.2 1175.5,146.8 1176.5,152.6 1177.5,159.3 1178.5,149.4 1179.5,145.3 1180.5,134.4 1181.5,130.9 1182.5,131.2 1183.5,133.3 1184.5,142.8 1185.5,154.3 1186.5,159.3 1187.5,153.0 1188.5,138.8 1189.5,122.4 1190.5,128.4 1191.5,134.5 1192.5,141.7 1193.5,151.5 1194.5,157.5 1195.5,153.9 1196.5,140.7 1197.5,136.8 1198.5,132.2 1199.5,132.8 1200.5,131.2 1201.5,140.4 1202.5,153.2 1203.5,157.8 1204.5,150.8 1205.5,138.5 1206.5,130.8 1207.5,126.6 1208.5,133.1 1209.5,136.5 1210.5,145.8 1211.5,145.7 1212.5,159.4 1213.5,152.2 1214.5,138.4 1215.5,135.8 1216.5,126.2 1217.5,132.2 1218.5,138.9 1219.5,149.3 1220.5,160.1 1221.5,159.2 1222.5,141.1 1223.5,137.4 1224.5,130.4 1225.5,126.8 1226.5,131.6 1227.5,137.8 1228.5,150.4 1229.5,156.2 1230.5,150.0 1231.5,147.0 1232.5,142.2 1233.5,132.4 1234.5,132.7 1235.5,133.6 1236.5,146.3 1237.5,155.6 1238.5,156.8 1239.5,146.1 1240.5,143.4 1241.5,134.8 1242.5,130.5 1243.5,130.1 1244.5,134.4 1245.5,141.6 1246.5,160.0 1247.5,151.6 1248.5,149.6 1249.5,142.3 1250.5,124.8 1251.5,129.8 1252.5,121.7 1253.5,132.5 1254.5,148.4 1255.5,150.3 1256.5,148.5 1257.5,144.0 1258.5,143.0 1259.5,129.3 1260.5,126.1 1261.5,134.1 1262.5,133.0 1263.5,149.0 1264.5,155.5 1265.5,152.0 1266.5,144.8 1267.5,135.3 1268.5,125.8 1269.5,128.9 1270.5,137.7 1271.5,145.5 1272.5,158.4 1273.5,154.9 1274.5,153.8 1275.5,141.8 1276.5,137.0 1277.5,131.2 1278.5,128.0 1279.5,140.6 1280.5,137.6 1281.5,168.2 1282.5,169.4 1283.5,150.0 1284.5,132.4 1285.5,124.4 1286.5,126.2 1287.5,136.0 1288.5,141.9 1289.5,147.0 1290.5,157.4 1291.5,158.2 1292.5,150.0 1293.5,139.0 1294.5,129.1 1295.5,129.7 1296.5,133.1 1297.5,132.8 1298.5,145.2 1299.5,159.9 1300.5,151.2 1301.5,142.6 1302.5,133.8 1303.5,123.9 1304.5,130.1 1305.5,136.9 1306.5,146.2 1307.5,153.3 1308.5,150.4 1309.5,145.8 1310.5,144.6 1311.5,133.4 1312.5,130.7 1313.5,127.7 1314.5,136.3 1315.5,141.9 1316.5,151.3 1317.5,157.7 1318.5,143.2 1319.5,135.7 1320.5,128.2 1321.5,130.7 1322.5,130.7 1323.5,142.1 1324.5,151.4 1325.5,153.5 1326.5,150.5 1327.5,146.2 1328.5,139.8 1329.5,136.1 1330.5,129.9 1331.5,129.9 1332.5,143.4 1333.5,160.3 1334.5,159.5 1335.5,149.4 1336.5,135.4 1337.5,127.6 1338.5,125.4 1339.5,128.7 1340.5,140.7 1341.5,148.4 1342.5,156.1 1343.5,158.7 1344.5,148.6 1345.5,140.6 1346.5,129.7 1347.5,122.9 1348.5,128.4 1349.5,137.5 1350.5,148.5 1351.5,159.6 1352.5,153.6 1353.5,143.3 1354.5,139.8 1355.5,125.3 1356.5,129.6 1357.5,132.4 1358.5,143.7 1359.5,155.8 1360.5,149.0 1361.5,156.0 1362.5,140.6 1363.5,136.4 1364.5,128.0 1365.5,131.9 1366.5,136.3 1367.5,139.6 1368.5,143.1 1369.5,154.8 1370.5,147.0 1371.5,135.8 1372.5,133.7 1373.5,125.7 1374.5,130.5 1375.5,133.7 1376.5,143.5 1377.5,148.4 1378.5,151.2 1379.5,149.2 1380.5,133.6 1381.5,131.6 1382.5,125.2 1383.5,126.2 1384.5,137.5 1385.5,150.2 1386.5,150.0 1387.5,151.0 1388.5,148.1 1389.5,136.3 1390.5,123.7 1391.5,131.1 1392.5,135.0 1393.5,144.6 1394.5,157.1 1395.5,156.6 1396.5,149.1 1397.5,141.6 1398.5,135.0 1399.5,137.5 1400.5,127.4 1401.5,134.5 1402.5,141.2 1403.5,146.9 1404.5,154.1 1405.5,149.4 1406.5,138.7 1407.5,126.9 1408.5,135.6 1409.5,130.9 1410.5,140.7 1411.5,145.6 1412.5,149.3 1413.5,154.2 1414.5,149.7 1415.5,135.9 1416.5,129.4 1417.5,130.8 1418.5,127.6 1419.5,141.5 1420.5,146.9 1421.5,159.1 1422.5,147.3 1423.5,146.7 1424.5,128.6 1425.5,132.0 1426.5,123.4 1427.5,134.4 1428.5,146.5 1429.5,149.2 1430.5,149.3 1431.5,149.1 1432.5,140.1 1433.5,130.0 1434.5,127.8 1435.5,139.6 1436.5,138.5 1437.5,144.4 1438.5,152.4 1439.5,150.3 1440.5,148.7 1441.5,128.3 1442.5,125.9 1443.5,124.7 1444.5,125.7 1445.5,133.8 1446.5,145.0 1447.5,153.4 1448.5,145.9 1449.5,140.1 1450.5,139.8 1451.5,131.3 1452.5,126.5 1453.5,132.1 1454.5,139.3 1455.5,145.5 1456.5,150.7 1457.5,141.9 1458.5,141.8 1459.5,133.8 1460.5,126.7 1461.5,126.4 1462.5,132.3 1463.5,138.1 1464.5,152.1 1465.5,148.2 1466.5,144.6 1467.5,142.0 1468.5,131.7 1469.5,120.5 1470.5,126.3 1471.5,138.9 1472.5,155.1 1473.5,156.8 1474.5,155.7 1475.5,145.1 1476.5,127.8 1477.5,125.4 1478.5,124.5 1479.5,133.7 1480.5,143.8 1481.5,149.6 1482.5,170.3 1483.5,154.9 1484.5,143.1 1485.5,134.9 1486.5,122.5 1487.5,127.5 1488.5,137.4 1489.5,136.4 1490.5,148.6 1491.5,155.0 1492.5,145.0 1493.5,136.7 1494.5,132.3 1495.5,125.0 1496.5,125.6 1497.5,138.7 1498.5,152.1 1499.5,161.0 1500.5,153.7 1501.5,141.7 1502.5,133.4 1503.5,124.3 1504.5,120.5 1505.5,129.8 1506.5,133.4 1507.5,149.8 1508.5,147.8 1509.5,147.1 1510.5,142.0 1511.5,135.7 1512.5,132.4 1513.5,126.1 1514.5,127.1 1515.5,141.6 1516.5,147.5 1517.5,155.9 1518.5,148.9 1519.5,144.4 1520.5,130.8 1521.5,127.1 1522.5,128.2 1523.5,137.4 1524.5,147.9 1525.5,152.4 1526.5,149.3 1527.5,141.5 1528.5,140.1 1529.5,128.8 1530.5,125.3 1531.5,126.3 1532.5,141.3 1533.5,144.5 1534.5,156.3 1535.5,148.6 1536.5,141.7 1537.5,132.8 1538.5,136.1 1539.5,122.4 1540.5,126.2 1541.5,142.3 1542.5,144.2 1543.5,152.9 1544.5,151.0 1545.5,144.0 1546.5,135.4 1547.5,126.7 1548.5,118.1 1549.5,133.1 1550.5,142.2 1551.5,153.4 1552.5,156.6 1553.5,151.7 1554.5,144.4 1555.5,130.0 1556.5,129.1 1557.5,123.9 1558.5,138.5 1559.5,141.4 1560.5,167.1 1561.5,165.9 1562.5,146.8 1563.5,140.1 1564.5,124.2 1565.5,128.5 1566.5,130.8 1567.5,140.7 1568.5,145.0 1569.5,153.0 1570.5,149.4 1571.5,141.9 1572.5,137.3 1573.5,133.7 1574.5,124.9 1575.5,127.1 1576.5,135.2 1577.5,149.1 1578.5,147.3 1579.5,144.6 1580.5,137.7 1581.5,129.6 1582.5,127.4 1583.5,124.3 1584.5,128.0 1585.5,141.8 1586.5,153.4 1587.5,151.2 1588.5,144.2 1589.5,142.7 1590.5,130.6 1591.5,122.0 1592.5,130.6 1593.5,136.2 1594.5,148.5 1595.5,147.3 1596.5,143.9 1597.5,144.5 1598.5,139.1 1599.5,134.3 1600.5,122.4 1601.5,128.4 1602.5,139.1 1603.5,139.9 1604.5,146.4 1605.5,144.9 1606.5,146.0 1607.5,132.5 1608.5,124.1 1609.5,129.8 1610.5,127.7 1611.5,134.0 1612.5,143.3 1613.5,152.9 1614.5,148.8 1615.5,134.9 1616.5,126.2 1617.5,120.8 1618.5,123.7 1619.5,135.1 1620.5,145.4 1621.5,158.3 1622.5,150.6 1623.5,138.4 1624.5,139.0 1625.5,131.6 1626.5,124.3 1627.5,128.4 1628.5,141.5 1629.5,147.3 1630.5,154.4 1631.5,142.7 1632.5,145.0 1633.5,132.0 1634.5,121.8 1635.5,122.1 1636.5,127.7 1637.5,134.4 1638.5,151.8 1639.5,153.4 1640.5,151.7 1641.5,143.1 1642.5,125.2 1643.5,134.9 1644.5,122.6 1645.5,135.0 1646.5,135.8 1647.5,144.2 1648.5,153.4 1649.5,138.8 1650.5,136.1 1651.5,123.2 1652.5,122.0 1653.5,129.5 1654.5,135.8 1655.5,143.1 1656.5,161.6 1657.5,163.5 1658.5,134.9 1659.5,135.3 1660.5,129.6 1661.5,125.2 1662.5,129.5 1663.5,140.8 1664.5,148.7 1665.5,148.6 1666.5,149.0 1667.5,141.2 1668.5,129.7 1669.5,120.0 1670.5,121.2 1671.5,126.4 1672.5,140.5 1673.5,148.8 1674.5,169.1 1675.5,147.9 1676.5,141.2 1677.5,130.4 1678.5,124.1 1679.5,127.4 1680.5,133.8 1681.5,143.0 1682.5,158.5 1683.5,165.6 1684.5,147.9 1685.5,135.6 1686.5,132.3 1687.5,129.2 1688.5,127.2 1689.5,140.6 1690.5,154.8 1691.5,154.1 1692.5,170.9 1693.5,187.6 1694.5,198.7 1695.5,176.4 1696.5,217.6 1697.5,205.6 1698.5,198.3 1699.5,203.8 1700.5,197.5 1701.5,221.5 1702.5,200.0 1703.5,198.0 1704.5,200.7 1705.5,207.1 1706.5,197.7 1707.5,205.3 1708.5,201.0 1709.5,206.5 1710.5,224.3 1711.5,209.0 1712.5,202.3 1713.5,195.1 1714.5,208.1 1715.5,204.2 1716.5,197.0 1717.5,199.2 1718.5,189.7 1719.5,179.9 1720.5,203.9 1721.5,220.5 1722.5,199.6 1723.5,187.1 1724.5,189.0 1725.5,190.6 1726.5,204.4 1727.5,209.4 1728.5,196.0 1729.5,208.7 1730.5,220.9 1731.5,217.0 1732.5,183.4 1733.5,178.6 1734.5,201.4 1735.5,208.7 1736.5,201.9 1737.5,209.0 1738.5,192.0 1739.5,199.8 1740.5,211.5 1741.5,192.7 1742.5,204.7 1743.5,200.8 1744.5,201.8 1745.5,204.9 1746.5,199.9 1747.5,207.9 1748.5,221.0 1749.5,228.3 1750.5,221.7 1751.5,215.0 1752.5,206.2 1753.5,202.8 1754.5,197.1 1755.5,199.5 1756.5,208.7 1757.5,210.6 1758.5,224.3 1759.5,210.3 1760.5,200.1 1761.5,196.6 1762.5,201.6 1763.5,203.5 1764.5,193.8 1765.5,199.5 1766.5,194.4 1767.5,194.4 1768.5,197.8 1769.5,188.7 1770.5,203.4 1771.5,205.8 1772.5,210.7 1773.5,212.1 1774.5,190.6 1775.5,182.3 1776.5,195.9 1777.5,195.0 1778.5,183.6 1779.5,174.5 1780.5,160.6 1781.5,182.5 1782.5,194.1 1783.5,194.9 1784.5,188.2 1785.5,197.0 1786.5,208.5 1787.5,207.3 1788.5,209.8 1789.5,212.4 1790.5,191.2 1791.5,204.6 1792.5,202.7 1793.5,182.2 1794.5,185.1 1795.5,193.9 1796.5,205.3 1797.5,199.2 1798.5,186.2 1799.5,191.5 1800.5,187.2 1801.5,196.7 1802.5,195.7 1803.5,202.0 1804.5,198.1 1805.5,188.8 1806.5,211.4 1807.5,205.5 1808.5,200.9 1809.5,207.0 1810.5,206.4 1811.5,196.1 1812.5,181.7 1813.5,190.1 1814.5,195.5 1815.5,214.5 1816.5,187.9 1817.5,197.1 1818.5,200.9 1819.5,212.1 1820.5,205.6 1821.5,213.3 1822.5,204.8 1823.5,198.6 1824.5,200.7 1825.5,199.1 1826.5,209.1 1827.5,190.9 1828.5,204.8 1829.5,219.8 1830.5,209.1 1831.5,211.3 1832.5,214.2 1833.5,209.0" fill="none" stroke="#dcdcdc" stroke-width="1"/><rect x="1057.5" y="472.7" width="145.5" height="346" fill="#404040"/><line x1="1057" y1="472.5" x2="1857.5" y2="472.5" stroke="rgba(255,255,255,0.27)" stroke-width="1"/><line x1="1057" y1="542.5" x2="1857.5" y2="542.5" stroke="rgba(255,255,255,0.27)" stroke-width="1"/><line x1="1057" y1="611.5" x2="1857.5" y2="611.5" stroke="rgba(255,255,255,0.27)" stroke-width="1"/><line x1="1057" y1="680.5" x2="1857.5" y2="680.5" stroke="rgba(255,255,255,0.27)" stroke-width="1"/><line x1="1057" y1="749.5" x2="1857.5" y2="749.5" stroke="rgba(255,255,255,0.27)" stroke-width="1"/><line x1="1057" y1="818.5" x2="1857.5" y2="818.5" stroke="#8a8a8a" stroke-width="1"/><line x1="1094.5" y1="472.5" x2="1094.5" y2="818" stroke="rgba(255,255,255,0.27)" stroke-width="1"/><line x1="1147.5" y1="472.5" x2="1147.5" y2="818" stroke="rgba(255,255,255,0.27)" stroke-width="1"/><line x1="1201.5" y1="472.5" x2="1201.5" y2="818" stroke="rgba(255,255,255,0.27)" stroke-width="1"/><line x1="1254.5" y1="472.5" x2="1254.5" y2="818" stroke="rgba(255,255,255,0.27)" stroke-width="1"/><line x1="1308.5" y1="472.5" x2="1308.5" y2="818" stroke="rgba(255,255,255,0.27)" stroke-width="1"/><line x1="1361.5" y1="472.5" x2="1361.5" y2="818" stroke="rgba(255,255,255,0.27)" stroke-width="1"/><line x1="1415.5" y1="472.5" x2="1415.5" y2="818" stroke="rgba(255,255,255,0.27)" stroke-width="1"/><line x1="1468.5" y1="472.5" x2="1468.5" y2="818" stroke="rgba(255,255,255,0.27)" stroke-width="1"/><line x1="1522.5" y1="472.5" x2="1522.5" y2="818" stroke="rgba(255,255,255,0.27)" stroke-width="1"/><line x1="1575.5" y1="472.5" x2="1575.5" y2="818" stroke="rgba(255,255,255,0.27)" stroke-width="1"/><line x1="1629.5" y1="472.5" x2="1629.5" y2="818" stroke="rgba(255,255,255,0.27)" stroke-width="1"/><line x1="1682.5" y1="472.5" x2="1682.5" y2="818" stroke="rgba(255,255,255,0.27)" stroke-width="1"/><line x1="1736.5" y1="472.5" x2="1736.5" y2="818" stroke="rgba(255,255,255,0.27)" stroke-width="1"/><line x1="1789.5" y1="472.5" x2="1789.5" y2="818" stroke="rgba(255,255,255,0.27)" stroke-width="1"/><line x1="1843.5" y1="472.5" x2="1843.5" y2="818" stroke="rgba(255,255,255,0.27)" stroke-width="1"/><line x1="1857.5" y1="472.5" x2="1857.5" y2="818" stroke="rgba(255,255,255,0.27)" stroke-width="1"/><line x1="1057.5" y1="472.5" x2="1057.5" y2="819" stroke="#a05858" stroke-width="1.2"/><line x1="1203.2" y1="472.7" x2="1203.2" y2="818.6" stroke="#8f8a3a" stroke-width="1.2"/><polyline points="1058.0,731.1 1059.0,719.8 1060.0,748.3 1061.0,766.5 1062.0,716.8 1063.0,722.3 1064.0,729.5 1065.0,758.1 1066.0,753.5 1067.0,741.9 1068.0,717.3 1069.0,727.3 1070.0,737.6 1071.0,735.6 1072.0,731.6 1073.0,744.6 1074.0,731.0 1075.0,721.5 1076.0,696.1 1077.0,709.3 1078.0,697.8 1079.0,731.9 1080.0,707.6 1081.0,714.7 1082.0,729.8 1083.0,725.9 1084.0,700.2 1085.0,716.8 1086.0,697.6 1087.0,681.0 1088.0,668.0 1089.0,668.4 1090.0,722.2 1091.0,700.5 1092.0,721.5 1093.0,699.3 1094.0,705.5 1095.0,697.7 1096.0,671.1 1097.0,725.8 1098.0,716.5 1099.0,759.8 1100.0,686.9 1101.0,735.0 1102.0,716.4 1103.0,746.8 1104.0,752.9 1105.0,738.6 1106.0,702.1 1107.0,694.0 1108.0,702.5 1109.0,718.4 1110.0,679.1 1111.0,723.0 1112.0,733.8 1113.0,709.4 1114.0,730.0 1115.0,715.6 1116.0,697.9 1117.0,711.6 1118.0,707.5 1119.0,720.0 1120.0,727.1 1121.0,744.4 1122.0,757.6 1123.0,727.5 1124.0,746.8 1125.0,734.6 1126.0,714.0 1127.0,681.3 1128.0,720.7 1129.0,713.8 1130.0,693.7 1131.0,690.4 1132.0,724.9 1133.0,675.8 1134.0,716.5 1135.0,694.7 1136.0,706.2 1137.0,680.3 1138.0,672.6 1139.0,690.7 1140.0,695.8 1141.0,719.0 1142.0,718.7 1143.0,732.0 1144.0,683.8 1145.0,735.4 1146.0,768.9 1147.0,790.9 1148.0,811.7 1149.0,790.9 1150.0,704.1 1151.0,726.7 1152.0,728.1 1153.0,709.8 1154.0,711.3 1155.0,735.8 1156.0,702.3 1157.0,706.0 1158.0,712.8 1159.0,738.7 1160.0,726.1 1161.0,727.4 1162.0,729.4 1163.0,736.0 1164.0,737.0 1165.0,726.2 1166.0,706.0 1167.0,707.1 1168.0,670.2 1169.0,729.6 1170.0,718.5 1171.0,716.2 1172.0,723.1 1173.0,683.4 1174.0,741.4 1175.0,738.9 1176.0,718.2 1177.0,718.9 1178.0,701.8 1179.0,732.2 1180.0,704.0 1181.0,722.5 1182.0,726.7 1183.0,702.9 1184.0,693.7 1185.0,712.8 1186.0,724.2 1187.0,716.7 1188.0,714.0 1189.0,713.9 1190.0,724.9 1191.0,736.1 1192.0,707.4 1193.0,702.4 1194.0,713.6 1195.0,716.6 1196.0,709.4 1197.0,701.1 1198.0,699.7 1199.0,676.6 1200.0,667.2 1201.0,655.3 1202.0,627.5 1203.0,571.8 1203.5,534.9 1204.0,571.6 1205.0,626.9 1206.0,650.5 1207.0,659.7 1208.0,662.2 1209.0,646.1 1210.0,669.8 1211.0,688.2 1212.0,700.4 1213.0,705.0 1214.0,705.9 1215.0,698.3 1216.0,718.7 1217.0,703.1 1218.0,711.2 1219.0,712.5 1220.0,718.2 1221.0,732.3 1222.0,718.3 1223.0,733.6 1224.0,707.7 1225.0,734.2 1226.0,697.5 1227.0,700.2 1228.0,701.4 1229.0,696.5 1230.0,715.9 1231.0,713.2 1232.0,707.7 1233.0,710.0 1234.0,714.0 1235.0,702.8 1236.0,700.2 1237.0,711.7 1238.0,718.0 1239.0,705.2 1240.0,693.5 1241.0,697.7 1242.0,711.5 1243.0,704.0 1244.0,687.4 1245.0,701.4 1246.0,692.8 1247.0,677.9 1248.0,679.6 1249.0,670.8 1250.0,656.8 1251.0,646.8 1252.0,631.1 1253.0,608.9 1254.0,571.2 1255.0,514.1 1256.0,571.0 1257.0,608.6 1258.0,629.9 1259.0,645.0 1260.0,658.6 1261.0,671.2 1262.0,678.5 1263.0,684.3 1264.0,691.2 1265.0,697.1 1266.0,702.6 1267.0,701.2 1268.0,705.6 1269.0,699.5 1270.0,707.8 1271.0,699.0 1272.0,707.5 1273.0,692.3 1274.0,698.7 1275.0,721.2 1276.0,719.5 1277.0,709.1 1278.0,720.8 1279.0,723.1 1280.0,725.5 1281.0,733.1 1282.0,698.8 1283.0,693.2 1284.0,726.7 1285.0,713.6 1286.0,691.9 1287.0,724.6 1288.0,740.3 1289.0,746.2 1290.0,743.1 1291.0,753.5 1292.0,739.4 1293.0,751.1 1294.0,734.2 1295.0,690.2 1296.0,734.2 1297.0,716.8 1298.0,696.4 1299.0,750.5 1300.0,731.6 1301.0,728.1 1302.0,731.1 1303.0,713.0 1304.0,724.4 1305.0,712.8 1306.0,724.2 1307.0,724.2 1308.0,739.1 1309.0,695.4 1310.0,722.3 1311.0,743.2 1312.0,697.8 1313.0,686.8 1314.0,711.8 1315.0,728.7 1316.0,727.4 1317.0,697.8 1318.0,718.1 1319.0,708.8 1320.0,704.1 1321.0,717.4 1322.0,720.4 1323.0,683.7 1324.0,688.1 1325.0,684.9 1326.0,699.7 1327.0,684.6 1328.0,704.1 1329.0,670.5 1330.0,686.8 1331.0,710.8 1332.0,732.7 1333.0,715.3 1334.0,714.9 1335.0,703.5 1336.0,723.1 1337.0,700.5 1338.0,689.1 1339.0,664.2 1340.0,666.9 1341.0,690.9 1342.0,677.6 1343.0,712.3 1344.0,694.4 1345.0,709.4 1346.0,694.9 1347.0,711.2 1348.0,724.4 1349.0,758.1 1350.0,706.6 1351.0,721.0 1352.0,715.4 1353.0,716.8 1354.0,761.3 1355.0,723.7 1356.0,733.8 1357.0,721.0 1358.0,715.5 1359.0,758.1 1360.0,740.3 1361.0,730.2 1362.0,727.0 1363.0,710.5 1364.0,730.9 1365.0,732.9 1366.0,710.6 1367.0,748.7 1368.0,699.6 1369.0,730.7 1370.0,701.9 1371.0,718.5 1372.0,698.3 1373.0,702.7 1374.0,725.5 1375.0,757.0 1376.0,733.4 1377.0,724.7 1378.0,748.5 1379.0,741.2 1380.0,735.9 1381.0,733.1 1382.0,716.2 1383.0,735.1 1384.0,727.7 1385.0,700.0 1386.0,716.5 1387.0,692.0 1388.0,708.0 1389.0,720.3 1390.0,703.6 1391.0,708.0 1392.0,720.3 1393.0,726.2 1394.0,719.5 1395.0,712.3 1396.0,694.7 1397.0,698.8 1398.0,717.4 1399.0,741.9 1400.0,713.9 1401.0,704.6 1402.0,676.3 1403.0,705.2 1404.0,728.5 1405.0,699.4 1406.0,707.8 1407.0,732.4 1408.0,693.9 1409.0,701.8 1410.0,688.1 1411.0,718.7 1412.0,738.6 1413.0,704.5 1414.0,719.5 1415.0,721.4 1416.0,723.0 1417.0,737.0 1418.0,704.2 1419.0,683.6 1420.0,690.8 1421.0,742.2 1422.0,726.6 1423.0,728.2 1424.0,716.8 1425.0,758.9 1426.0,750.5 1427.0,744.4 1428.0,713.6 1429.0,722.6 1430.0,686.3 1431.0,731.0 1432.0,723.9 1433.0,727.3 1434.0,734.4 1435.0,701.8 1436.0,733.3 1437.0,735.1 1438.0,733.4 1439.0,732.6 1440.0,708.5 1441.0,730.6 1442.0,718.3 1443.0,726.7 1444.0,699.7 1445.0,708.5 1446.0,710.6 1447.0,744.7 1448.0,713.0 1449.0,724.4 1450.0,672.0 1451.0,704.9 1452.0,705.7 1453.0,700.4 1454.0,705.4 1455.0,728.2 1456.0,734.4 1457.0,712.0 1458.0,737.8 1459.0,714.5 1460.0,688.7 1461.0,707.1 1462.0,716.9 1463.0,706.5 1464.0,688.4 1465.0,713.7 1466.0,693.6 1467.0,718.6 1468.0,698.8 1469.0,697.5 1470.0,729.2 1471.0,703.0 1472.0,699.0 1473.0,735.2 1474.0,724.0 1475.0,726.7 1476.0,734.7 1477.0,715.9 1478.0,730.8 1479.0,717.3 1480.0,737.5 1481.0,730.5 1482.0,691.9 1483.0,703.7 1484.0,740.0 1485.0,745.6 1486.0,730.2 1487.0,755.8 1488.0,713.3 1489.0,723.0 1490.0,728.9 1491.0,729.3 1492.0,741.0 1493.0,755.4 1494.0,789.5 1495.0,774.5 1496.0,737.2 1497.0,716.4 1498.0,722.2 1499.0,756.2 1500.0,739.3 1501.0,727.4 1502.0,754.0 1503.0,711.0 1504.0,744.3 1505.0,735.7 1506.0,751.6 1507.0,720.4 1508.0,746.4 1509.0,745.9 1510.0,714.0 1511.0,740.9 1512.0,735.8 1513.0,717.5 1514.0,689.5 1515.0,744.4 1516.0,714.6 1517.0,718.1 1518.0,694.3 1519.0,730.3 1520.0,696.0 1521.0,692.4 1522.0,707.6 1523.0,703.1 1524.0,690.8 1525.0,686.4 1526.0,655.5 1527.0,603.8 1528.0,654.3 1529.0,678.6 1530.0,707.5 1531.0,705.7 1532.0,702.7 1533.0,685.6 1534.0,715.8 1535.0,693.1 1536.0,714.8 1537.0,705.1 1538.0,715.3 1539.0,709.4 1540.0,722.3 1541.0,734.0 1542.0,699.2 1543.0,687.5 1544.0,712.5 1545.0,726.4 1546.0,727.6 1547.0,745.2 1548.0,751.3 1549.0,733.0 1550.0,716.9 1551.0,734.2 1552.0,726.6 1553.0,755.5 1554.0,742.9 1555.0,715.2 1556.0,720.0 1557.0,746.3 1558.0,759.9 1559.0,737.1 1560.0,732.0 1561.0,702.7 1562.0,697.2 1563.0,716.8 1564.0,734.1 1565.0,726.9 1566.0,746.0 1567.0,744.2 1568.0,713.1 1569.0,709.2 1570.0,703.6 1571.0,689.2 1572.0,720.3 1573.0,703.9 1574.0,713.8 1575.0,711.2 1576.0,702.8 1577.0,696.4 1578.0,728.6 1579.0,735.4 1580.0,717.5 1581.0,701.9 1582.0,713.5 1583.0,710.3 1584.0,730.6 1585.0,693.7 1586.0,689.3 1587.0,674.5 1588.0,702.9 1589.0,709.5 1590.0,704.0 1591.0,681.2 1592.0,694.6 1593.0,700.3 1594.0,714.9 1595.0,736.8 1596.0,748.8 1597.0,737.5 1598.0,713.9 1599.0,716.6 1600.0,734.9 1601.0,690.3 1602.0,729.7 1603.0,695.8 1604.0,685.0 1605.0,697.0 1606.0,681.5 1607.0,724.6 1608.0,726.4 1609.0,722.2 1610.0,709.6 1611.0,714.7 1612.0,687.8 1613.0,713.7 1614.0,719.8 1615.0,738.2 1616.0,714.5 1617.0,703.1 1618.0,726.2 1619.0,739.8 1620.0,748.7 1621.0,704.4 1622.0,701.4 1623.0,707.2 1624.0,701.0 1625.0,709.0 1626.0,705.9 1627.0,747.0 1628.0,719.6 1629.0,712.9 1630.0,707.6 1631.0,703.7 1632.0,737.4 1633.0,735.8 1634.0,762.3 1635.0,693.2 1636.0,759.5 1637.0,724.9 1638.0,744.1 1639.0,747.8 1640.0,727.3 1641.0,737.4 1642.0,722.0 1643.0,698.0 1644.0,718.5 1645.0,702.7 1646.0,697.8 1647.0,680.0 1648.0,719.4 1649.0,715.1 1650.0,704.6 1651.0,709.6 1652.0,697.8 1653.0,727.0 1654.0,730.0 1655.0,736.7 1656.0,741.4 1657.0,744.3 1658.0,731.7 1659.0,747.2 1660.0,746.2 1661.0,726.2 1662.0,757.1 1663.0,758.0 1664.0,747.6 1665.0,755.3 1666.0,756.5 1667.0,708.1 1668.0,713.1 1669.0,732.7 1670.0,739.9 1671.0,755.0 1672.0,720.2 1673.0,771.8 1674.0,730.1 1675.0,733.6 1676.0,708.6 1677.0,726.5 1678.0,773.4 1679.0,715.4 1680.0,751.3 1681.0,717.0 1682.0,738.3 1683.0,747.9 1684.0,732.0 1685.0,719.0 1686.0,730.2 1687.0,739.3 1688.0,721.9 1689.0,757.5 1690.0,708.5 1691.0,738.5 1692.0,706.4 1693.0,718.0 1694.0,729.1 1695.0,746.7 1696.0,704.7 1697.0,725.6 1698.0,751.3 1699.0,720.3 1700.0,718.3 1701.0,709.3 1702.0,720.0 1703.0,714.9 1704.0,712.2 1705.0,717.3 1706.0,746.7 1707.0,722.0 1708.0,695.2 1709.0,704.2 1710.0,693.5 1711.0,691.5 1712.0,710.1 1713.0,663.9 1714.0,711.5 1715.0,734.4 1716.0,748.1 1717.0,716.9 1718.0,715.5 1719.0,718.8 1720.0,739.0 1721.0,766.2 1722.0,732.1 1723.0,735.2 1724.0,742.8 1725.0,741.5 1726.0,741.5 1727.0,763.1 1728.0,726.6 1729.0,709.9 1730.0,708.5 1731.0,727.0 1732.0,756.8 1733.0,757.9 1734.0,737.6 1735.0,703.4 1736.0,706.5 1737.0,727.4 1738.0,729.5 1739.0,722.0 1740.0,734.7 1741.0,729.2 1742.0,730.1 1743.0,747.0 1744.0,759.9 1745.0,750.7 1746.0,713.9 1747.0,750.3 1748.0,746.5 1749.0,745.5 1750.0,735.8 1751.0,743.7 1752.0,719.2 1753.0,734.1 1754.0,731.2 1755.0,718.2 1756.0,751.1 1757.0,721.0 1758.0,702.8 1759.0,743.6 1760.0,735.5 1761.0,749.9 1762.0,744.7 1763.0,726.7 1764.0,764.8 1765.0,722.8 1766.0,716.3 1767.0,724.1 1768.0,681.2 1769.0,719.0 1770.0,748.1 1771.0,722.9 1772.0,721.3 1773.0,732.4 1774.0,767.4 1775.0,778.4 1776.0,711.4 1777.0,751.3 1778.0,711.3 1779.0,707.2 1780.0,761.7 1781.0,738.5 1782.0,722.1 1783.0,711.3 1784.0,700.0 1785.0,699.6 1786.0,722.4 1787.0,729.2 1788.0,736.5 1789.0,699.3 1790.0,746.7 1791.0,750.1 1792.0,691.7 1793.0,700.6 1794.0,695.4 1795.0,716.6 1796.0,709.0 1797.0,735.8 1798.0,762.4 1799.0,744.1 1800.0,763.8 1801.0,726.7 1802.0,718.2 1803.0,709.9 1804.0,720.3 1805.0,731.7 1806.0,685.4 1807.0,692.4 1808.0,699.3 1809.0,696.2 1810.0,721.4 1811.0,710.7 1812.0,732.1 1813.0,705.1 1814.0,703.5 1815.0,706.0 1816.0,715.4 1817.0,727.2 1818.0,722.3 1819.0,711.2 1820.0,724.3 1821.0,717.1 1822.0,713.6 1823.0,740.6 1824.0,763.9 1825.0,739.5 1826.0,739.7 1827.0,741.9 1828.0,749.6 1829.0,753.7 1830.0,761.1 1831.0,739.3 1832.0,753.6 1833.0,759.7 1834.0,730.8 1835.0,689.9 1836.0,679.6 1837.0,700.2 1838.0,699.4 1839.0,717.8 1840.0,717.3 1841.0,735.3 1842.0,716.6 1843.0,761.7 1844.0,743.8 1845.0,739.6 1846.0,732.6 1847.0,691.6 1848.0,728.9 1849.0,743.8 1850.0,720.2 1851.0,710.1 1852.0,708.7 1853.0,727.0 1854.0,751.5 1855.0,737.2 1856.0,753.2 1857.0,736.0" fill="none" stroke="#dcdcdc" stroke-width="1"/><circle cx="1203.8" cy="534.9" r="4" fill="#ff1010"/><circle cx="1255" cy="514.3" r="4.6" fill="#ffee00"/></svg><div style="position:absolute;left:646.14px;top:28.32px;font-size:13.33px;line-height:13.33px;color:#f0f0f0;white-space:pre;">20.0</div><div style="position:absolute;left:653.54px;top:100.22px;font-size:13.33px;line-height:13.33px;color:#f0f0f0;white-space:pre;">0.0</div><div style="position:absolute;left:641.67px;top:172.22px;font-size:13.33px;line-height:13.33px;color:#f0f0f0;white-space:pre;">-20.0</div><div style="position:absolute;left:641.67px;top:244.12px;font-size:13.33px;line-height:13.33px;color:#f0f0f0;white-space:pre;">-40.0</div><div style="position:absolute;left:641.67px;top:315.62px;font-size:13.33px;line-height:13.33px;color:#f0f0f0;white-space:pre;">-60.0</div><div style="position:absolute;left:760.84px;top:329.22px;font-size:13.33px;line-height:13.33px;color:#f0f0f0;white-space:pre;">207.2</div><div style="position:absolute;left:872.70px;top:329.22px;font-size:13.33px;line-height:13.33px;color:#f0f0f0;white-space:pre;">207.4</div><div style="position:absolute;left:984.77px;top:329.22px;font-size:13.33px;line-height:13.33px;color:#f0f0f0;white-space:pre;">207.6</div><div style="position:absolute;left:1096.77px;top:329.22px;font-size:13.33px;line-height:13.33px;color:#f0f0f0;white-space:pre;">207.8</div><div style="position:absolute;left:1214.34px;top:329.22px;font-size:13.33px;line-height:13.33px;color:#f0f0f0;white-space:pre;">208</div><div style="position:absolute;left:1320.84px;top:329.22px;font-size:13.33px;line-height:13.33px;color:#f0f0f0;white-space:pre;">208.2</div><div style="position:absolute;left:1432.70px;top:329.22px;font-size:13.33px;line-height:13.33px;color:#f0f0f0;white-space:pre;">208.4</div><div style="position:absolute;left:1544.77px;top:329.22px;font-size:13.33px;line-height:13.33px;color:#f0f0f0;white-space:pre;">208.6</div><div style="position:absolute;left:1656.77px;top:329.22px;font-size:13.33px;line-height:13.33px;color:#f0f0f0;white-space:pre;">208.8</div><div style="position:absolute;left:1774.37px;top:329.22px;font-size:13.33px;line-height:13.33px;color:#f0f0f0;white-space:pre;">209</div><div style="position:absolute;left:1198.98px;top:350.96px;font-size:16.00px;line-height:16.00px;color:#f0f0f0;white-space:pre;">Frequency (MHz)</div><div style="position:absolute;left:508.3px;top:133px;width:200px;height:18px;line-height:18px;font-size:16px;color:#f0f0f0;text-align:center;transform:rotate(-90deg);transform-origin:100px 9px">Magnitude (dB)</div><div style="position:absolute;left:1027.24px;top:467.12px;font-size:13.33px;line-height:13.33px;color:#f0f0f0;white-space:pre;">0.0</div><div style="position:absolute;left:1015.37px;top:537.02px;font-size:13.33px;line-height:13.33px;color:#f0f0f0;white-space:pre;">-10.0</div><div style="position:absolute;left:1015.37px;top:605.82px;font-size:13.33px;line-height:13.33px;color:#f0f0f0;white-space:pre;">-20.0</div><div style="position:absolute;left:1015.37px;top:674.72px;font-size:13.33px;line-height:13.33px;color:#f0f0f0;white-space:pre;">-30.0</div><div style="position:absolute;left:1015.37px;top:743.82px;font-size:13.33px;line-height:13.33px;color:#f0f0f0;white-space:pre;">-40.0</div><div style="position:absolute;left:1015.37px;top:813.02px;font-size:13.33px;line-height:13.33px;color:#f0f0f0;white-space:pre;">-50.0</div><div style="position:absolute;left:1084.70px;top:825.72px;font-size:13.33px;line-height:13.33px;color:#f0f0f0;white-space:pre;">-60</div><div style="position:absolute;left:1138.15px;top:825.72px;font-size:13.33px;line-height:13.33px;color:#f0f0f0;white-space:pre;">-40</div><div style="position:absolute;left:1191.60px;top:825.72px;font-size:13.33px;line-height:13.33px;color:#f0f0f0;white-space:pre;">-20</div><div style="position:absolute;left:1251.02px;top:825.72px;font-size:13.33px;line-height:13.33px;color:#f0f0f0;white-space:pre;">0</div><div style="position:absolute;left:1300.70px;top:825.72px;font-size:13.33px;line-height:13.33px;color:#f0f0f0;white-space:pre;">20</div><div style="position:absolute;left:1354.35px;top:825.72px;font-size:13.33px;line-height:13.33px;color:#f0f0f0;white-space:pre;">40</div><div style="position:absolute;left:1407.60px;top:825.72px;font-size:13.33px;line-height:13.33px;color:#f0f0f0;white-space:pre;">60</div><div style="position:absolute;left:1461.09px;top:825.72px;font-size:13.33px;line-height:13.33px;color:#f0f0f0;white-space:pre;">80</div><div style="position:absolute;left:1510.64px;top:825.72px;font-size:13.33px;line-height:13.33px;color:#f0f0f0;white-space:pre;">100</div><div style="position:absolute;left:1564.09px;top:825.72px;font-size:13.33px;line-height:13.33px;color:#f0f0f0;white-space:pre;">120</div><div style="position:absolute;left:1617.54px;top:825.72px;font-size:13.33px;line-height:13.33px;color:#f0f0f0;white-space:pre;">140</div><div style="position:absolute;left:1670.99px;top:825.72px;font-size:13.33px;line-height:13.33px;color:#f0f0f0;white-space:pre;">160</div><div style="position:absolute;left:1724.44px;top:825.72px;font-size:13.33px;line-height:13.33px;color:#f0f0f0;white-space:pre;">180</div><div style="position:absolute;left:1778.05px;top:825.72px;font-size:13.33px;line-height:13.33px;color:#f0f0f0;white-space:pre;">200</div><div style="position:absolute;left:1831.50px;top:825.72px;font-size:13.33px;line-height:13.33px;color:#f0f0f0;white-space:pre;">220</div><div style="position:absolute;left:1381.90px;top:846.74px;font-size:13.19px;line-height:13.19px;color:#f0f0f0;white-space:pre;transform:scaleX(1.0443);transform-origin:0 0;">Distance Difference (km)</div><div style="position:absolute;left:889px;top:637.6px;width:200px;height:16px;line-height:16px;font-size:13.5px;color:#f0f0f0;text-align:center;transform:rotate(-90deg);transform-origin:100px 8px">Magnitude (dB)</div></body></html>
